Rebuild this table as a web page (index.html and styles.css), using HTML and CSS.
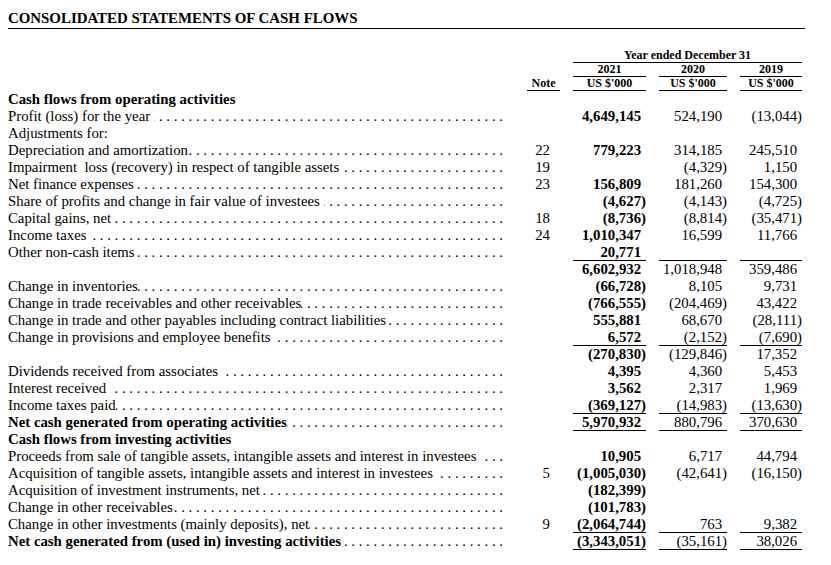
FILE: index.html
```html
<!DOCTYPE html>
<html>
<head>
<meta charset="utf-8">
<title>Consolidated Statements of Cash Flows</title>
<link rel="stylesheet" href="styles.css">
</head>
<body>
<div class="page">
  <h1 class="title">CONSOLIDATED STATEMENTS OF CASH FLOWS</h1>

  <div class="head">
    <div class="grid hrow">
      <div class="span3 uline">Year ended December 31</div>
    </div>
    <div class="grid hrow">
      <div class="c1 uline">2021</div>
      <div class="c2 uline">2020</div>
      <div class="c3 uline">2019</div>
    </div>
    <div class="grid hrow">
      <div class="note uline">Note</div>
      <div class="c1 uline">US $'000</div>
      <div class="c2 uline">US $'000</div>
      <div class="c3 uline">US $'000</div>
    </div>
  </div>

  <div class="body">
    <div class="grid row b"><div class="lbl"><span class="t">Cash flows from operating activities</span></div></div>
    <div class="grid row"><div class="lbl"><span class="t">Profit (loss) for the year </span><span class="dots"></span></div><div class="note"></div><div class="num y1 pos">4,649,145</div><div class="num pos">524,190</div><div class="num">(13,044)</div></div>
    <div class="grid row"><div class="lbl"><span class="t">Adjustments for:</span></div></div>
    <div class="grid row"><div class="lbl"><span class="t">Depreciation and amortization</span><span class="dots"></span></div><div class="note">22</div><div class="num y1 pos">779,223</div><div class="num pos">314,185</div><div class="num pos">245,510</div></div>
    <div class="grid row"><div class="lbl"><span class="t">Impairment  loss (recovery) in respect of tangible assets </span><span class="dots"></span></div><div class="note">19</div><div class="num y1"></div><div class="num">(4,329)</div><div class="num pos">1,150</div></div>
    <div class="grid row"><div class="lbl"><span class="t">Net finance expenses </span><span class="dots"></span></div><div class="note">23</div><div class="num y1 pos">156,809</div><div class="num pos">181,260</div><div class="num pos">154,300</div></div>
    <div class="grid row"><div class="lbl"><span class="t">Share of profits and change in fair value of investees </span><span class="dots"></span></div><div class="note"></div><div class="num y1">(4,627)</div><div class="num">(4,143)</div><div class="num">(4,725)</div></div>
    <div class="grid row"><div class="lbl"><span class="t">Capital gains, net</span><span class="dots"></span></div><div class="note">18</div><div class="num y1">(8,736)</div><div class="num">(8,814)</div><div class="num">(35,471)</div></div>
    <div class="grid row"><div class="lbl"><span class="t">Income taxes </span><span class="dots"></span></div><div class="note">24</div><div class="num y1 pos">1,010,347</div><div class="num pos">16,599</div><div class="num pos">11,766</div></div>
    <div class="grid row u"><div class="lbl"><span class="t">Other non-cash items </span><span class="dots"></span></div><div class="note"></div><div class="num y1 pos">20,771</div><div class="num"></div><div class="num"></div></div>
    <div class="grid row"><div class="lbl"></div><div class="note"></div><div class="num y1 pos">6,602,932</div><div class="num pos">1,018,948</div><div class="num pos">359,486</div></div>
    <div class="grid row"><div class="lbl"><span class="t">Change in inventories</span><span class="dots"></span></div><div class="note"></div><div class="num y1">(66,728)</div><div class="num pos">8,105</div><div class="num pos">9,731</div></div>
    <div class="grid row"><div class="lbl"><span class="t">Change in trade receivables and other receivables</span><span class="dots"></span></div><div class="note"></div><div class="num y1">(766,555)</div><div class="num">(204,469)</div><div class="num pos">43,422</div></div>
    <div class="grid row"><div class="lbl"><span class="t">Change in trade and other payables including contract liabilities</span><span class="dots"></span></div><div class="note"></div><div class="num y1 pos">555,881</div><div class="num pos">68,670</div><div class="num">(28,111)</div></div>
    <div class="grid row u"><div class="lbl"><span class="t">Change in provisions and employee benefits </span><span class="dots"></span></div><div class="note"></div><div class="num y1 pos">6,572</div><div class="num">(2,152)</div><div class="num">(7,690)</div></div>
    <div class="grid row"><div class="lbl"></div><div class="note"></div><div class="num y1">(270,830)</div><div class="num">(129,846)</div><div class="num pos">17,352</div></div>
    <div class="grid row"><div class="lbl"><span class="t">Dividends received from associates  </span><span class="dots"></span></div><div class="note"></div><div class="num y1 pos">4,395</div><div class="num pos">4,360</div><div class="num pos">5,453</div></div>
    <div class="grid row"><div class="lbl"><span class="t">Interest received </span><span class="dots"></span></div><div class="note"></div><div class="num y1 pos">3,562</div><div class="num pos">2,317</div><div class="num pos">1,969</div></div>
    <div class="grid row u"><div class="lbl"><span class="t">Income taxes paid</span><span class="dots"></span></div><div class="note"></div><div class="num y1">(369,127)</div><div class="num">(14,983)</div><div class="num">(13,630)</div></div>
    <div class="grid row u"><div class="lbl"><span class="t b">Net cash generated from operating activities</span><span class="dots"></span></div><div class="note"></div><div class="num y1 pos">5,970,932</div><div class="num pos">880,796</div><div class="num pos">370,630</div></div>
    <div class="grid row b"><div class="lbl"><span class="t">Cash flows from investing activities</span></div></div>
    <div class="grid row"><div class="lbl"><span class="t">Proceeds from sale of tangible assets, intangible assets and interest in investees </span><span class="dots"></span></div><div class="note"></div><div class="num y1 pos">10,905</div><div class="num pos">6,717</div><div class="num pos">44,794</div></div>
    <div class="grid row"><div class="lbl"><span class="t">Acquisition of tangible assets, intangible assets and interest in investees </span><span class="dots"></span></div><div class="note">5</div><div class="num y1">(1,005,030)</div><div class="num">(42,641)</div><div class="num">(16,150)</div></div>
    <div class="grid row"><div class="lbl"><span class="t">Acquisition of investment instruments, net</span><span class="dots"></span></div><div class="note"></div><div class="num y1">(182,399)</div><div class="num"></div><div class="num"></div></div>
    <div class="grid row"><div class="lbl"><span class="t">Change in other receivables</span><span class="dots"></span></div><div class="note"></div><div class="num y1">(101,783)</div><div class="num"></div><div class="num"></div></div>
    <div class="grid row u"><div class="lbl"><span class="t">Change in other investments (mainly deposits), net</span><span class="dots"></span></div><div class="note">9</div><div class="num y1">(2,064,744)</div><div class="num pos">763</div><div class="num pos">9,382</div></div>
    <div class="grid row u"><div class="lbl"><span class="t b">Net cash generated from (used in) investing activities </span><span class="dots"></span></div><div class="note"></div><div class="num y1">(3,343,051)</div><div class="num">(35,161)</div><div class="num pos">38,026</div></div>
  </div>
</div>
</body>
</html>
```

FILE: styles.css
```css
* { box-sizing: border-box; }

html, body {
  margin: 0;
  padding: 0;
  background: #fff;
}

body {
  font-family: "Liberation Serif", "Times New Roman", serif;
  color: #000;
}

.page {
  padding: 0 8px;
  width: 831px;
}

.title {
  margin: 0;
  width: 797px;
  padding-top: 10px;
  padding-bottom: 2px;
  font-size: 14.9px;
  line-height: 16px;
  font-weight: bold;
  border-bottom: 1px solid #000;
}

.grid {
  display: grid;
  grid-template-columns: 506px 33px 73px 68px 62px;
  column-gap: 13px;
}

.head {
  margin-top: 20px;
  font-weight: bold;
  font-size: 12px;
}

.hrow {
  line-height: 13px;
}

.hrow > div {
  text-align: center;
  border-bottom: 1px solid #000;
}

.span3 { grid-column: 3 / 6; }
.hrow .note { grid-column: 2; }
.hrow .c1 { grid-column: 3; }
.hrow .c2 { grid-column: 4; }
.hrow .c3 { grid-column: 5; }

.row {
  height: 17px;
  line-height: 17px;
  font-size: 14.8px;
  white-space: nowrap;
}

.row.b { font-weight: bold; }
.t.b { font-weight: bold; }

.lbl {
  display: flex;
  padding-right: 11px;
  overflow: hidden;
}

.t {
  white-space: pre;
  flex: none;
}

.dots {
  flex: 1;
  overflow: hidden;
  direction: rtl;
  white-space: nowrap;
  font-weight: normal;
}

.dots::before {
  content: ". . . . . . . . . . . . . . . . . . . . . . . . . . . . . . . . . . . . . . . . . . . . . . . . . . . . . . . . . . . . . . . . . . . . . . . . . . . . . . . . . . . . . . . . . . . . . . . . . . . . . . ";
}

.row .note {
  text-align: right;
  padding-right: 10px;
}

.num {
  text-align: right;
}

.num.pos {
  padding-right: 0.333em;
}

.y1 { font-weight: bold; }

.row.u .num {
  box-shadow: inset 0 -1px 0 #000;
}
```
